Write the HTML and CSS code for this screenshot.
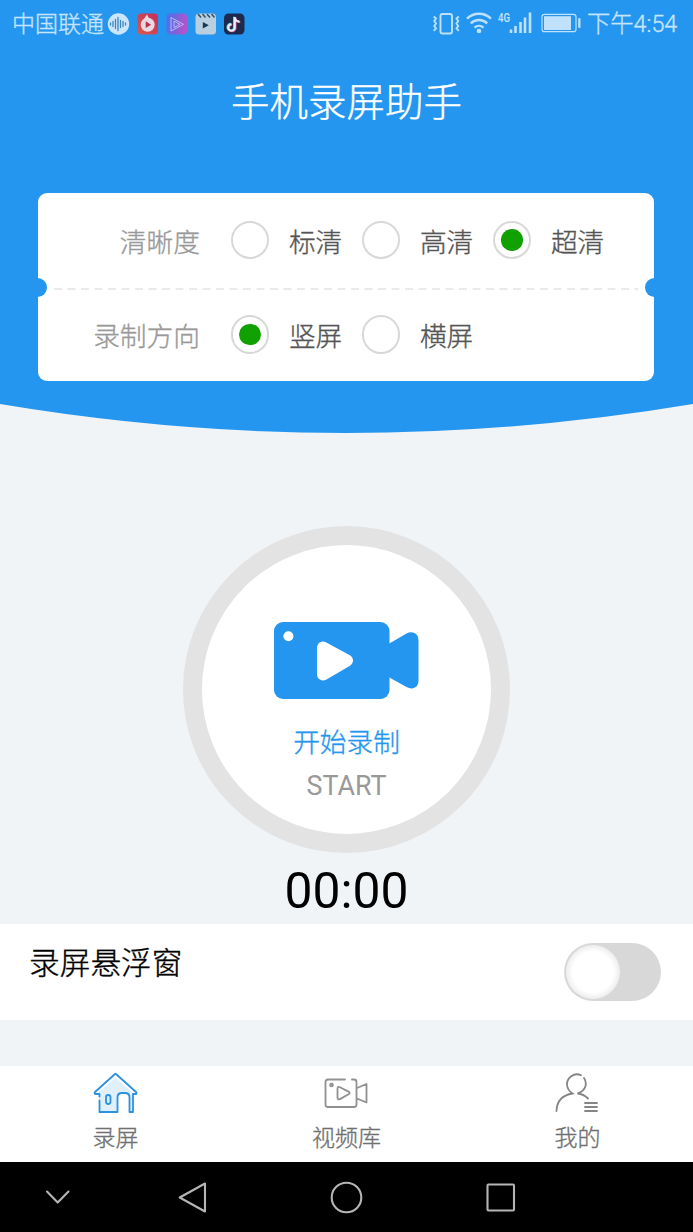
FILE: index.html
```html
<!DOCTYPE html>
<html lang="zh-CN">
<head>
<meta charset="utf-8">
<title>手机录屏助手</title>
<link rel="stylesheet" href="styles.css">
</head>
<body>
<div class="phone">
  <header class="header">
    <div class="status">
      <span class="carrier">中国联通</span>
      <svg class="apps" width="144" height="24" viewBox="0 0 144 24">
        <defs>
          <linearGradient id="red" x1="0" y1="1" x2="1" y2="0"><stop offset="0" stop-color="#d95a4a"/><stop offset="1" stop-color="#c02f5c"/></linearGradient>
          <linearGradient id="violet" x1="0" y1="0.3" x2="1" y2="0.5"><stop offset="0" stop-color="#4d6ff0"/><stop offset="0.5" stop-color="#7d62dc"/><stop offset="1" stop-color="#bd50c8"/></linearGradient>
        </defs>
        <circle cx="14.5" cy="12" r="10.7" fill="#cbe6fc"/>
        <path d="M6.5 11v2M9 9.500v5M11.500 7.500v9M14 5.500v13M16.500 8.500v7M19 9.500v5M21.500 11v2" stroke="#3d86bd" stroke-width="1.300" stroke-linecap="round"/>
        <rect x="33.500" y="1.500" width="20.500" height="21" rx="4" fill="url(#red)"/>
        <circle cx="43.700" cy="12.700" r="7" fill="#ead8e2"/>
        <path d="M39 8.500 43 2.500l2 4z" fill="#ead8e2"/>
        <path d="M41.700 9.300v6.800l5.400-3.400z" fill="#b8324c"/>
        <rect x="62.500" y="1.500" width="20.500" height="21" rx="4" fill="url(#violet)"/>
        <path d="M67 5.500v13.500l12.500-6.700zM70 9v6.500l6-3.200z" fill="none" stroke="#b9c6f5" stroke-width="0.900" stroke-linejoin="round"/>
        <rect x="91.500" y="1.500" width="20.500" height="21" rx="3.500" fill="#b9cfdf"/>
        <path d="M94 2l3 3.500M98.500 2l3 3.500M103 2l3 3.500M107.500 2l3 3.500" stroke="#31526d" stroke-width="1.500"/>
        <path d="M98.800 10v6.600l6-3.300z" fill="#153a58"/>
        <rect x="120" y="1.500" width="20.500" height="21" rx="4.500" fill="#1e2a4d"/>
        <g fill="none" stroke-width="2.100"><path d="M130.800 5v10.500a3.300 3.300 0 1 1-3.300-3.300M130.800 6c.8 2.600 2.300 3.600 4.800 3.700" stroke="#59cfe8" transform="translate(-.7 -.3)"/><path d="M130.800 5v10.500a3.300 3.300 0 1 1-3.300-3.300M130.800 6c.8 2.600 2.300 3.600 4.800 3.700" stroke="#d9527f" transform="translate(.7 .5)"/><path d="M130.800 5v10.500a3.300 3.300 0 1 1-3.300-3.300M130.800 6c.8 2.600 2.300 3.600 4.800 3.700" stroke="#e6effa"/></g>
      </svg>
      <svg class="signals" width="150" height="26" viewBox="0 0 150 26">
        <g fill="none" stroke="#bfe1fb">
          <rect x="9.500" y="3" width="11.500" height="19.500" rx="2" stroke-width="1.900"/>
          <path d="M2.700 5.500 5 7.500 3.300 10l1.700 2.500L3.300 15l1.700 2.500L2.700 19.800M27.800 5.500 25.500 7.500 27.200 10l-1.700 2.500L27.200 15l-1.700 2.500 2.300 2.300" stroke-width="1.900"/>
          <path d="M36 7.600a17.300 17.300 0 0 1 24 0M39.800 12.300a12 12 0 0 1 16.400 0M43.500 16.600a6.700 6.700 0 0 1 9 0" stroke-width="2.400"/>
          <rect x="111" y="3.300" width="34" height="17.400" rx="2.500" stroke-width="1.200"/>
        </g>
        <circle cx="48" cy="20" r="2.300" fill="#bfe1fb"/>
        <path d="M80 22v-3.500M84.500 22v-7M89.500 22v-11M94 22V6.500M99 22V1.500" stroke="#bfe1fb" stroke-width="2.600"/>
        <rect x="113" y="5.200" width="27" height="13.800" fill="#bfe1fb"/>
        <rect x="147.200" y="7" width="2.300" height="10" rx="1" fill="#bfe1fb"/>
        <text class="net" x="67" y="10.500" textLength="12" lengthAdjust="spacingAndGlyphs">4G</text>
      </svg>
      <span class="clock">下午4:54</span>
    </div>
    <h1 class="title">手机录屏助手</h1>
    <section class="card">
      <div class="row">
        <span class="label">清晰度</span>
        <span class="option"><i class="radio"></i>标清</span>
        <span class="option"><i class="radio"></i>高清</span>
        <span class="option"><i class="radio checked"></i>超清</span>
      </div>
      <svg class="divider" width="584" height="2" viewBox="0 0 584 2"><path d="M0 1h584" stroke="#e3e3e3" stroke-width="1.600" stroke-dasharray="8 5.500"/></svg>
      <div class="row">
        <span class="label">录制方向</span>
        <span class="option"><i class="radio checked"></i>竖屏</span>
        <span class="option"><i class="radio"></i>横屏</span>
      </div>
      <i class="notch left"></i><i class="notch right"></i>
    </section>
  </header>
  <svg class="curve" width="693" height="30" viewBox="0 0 693 30"><path d="M0 0Q346.500 58 693 0z" fill="#2496ef"/></svg>
  <main class="main">
    <div class="record">
      <svg width="145" height="77" viewBox="0 0 145 77">
        <rect width="115.500" height="77" rx="9" fill="#2496ef"/>
        <path d="M114 22.300 132.500 11.500Q136 9.500 139 10.500Q144.500 12 144.500 18V58.500Q144.500 65 139 66.300Q136 67 132.500 65L114 54.700z" fill="#2496ef"/>
        <circle cx="14.400" cy="14.300" r="5" fill="#fff"/>
        <path d="M49 25.500v27L73 38.500z" fill="#fff" stroke="#fff" stroke-width="12" stroke-linejoin="round"/>
      </svg>
      <span class="record-cn">开始录制</span>
      <span class="record-en">START</span>
    </div>
    <div class="timer">00:00</div>
  </main>
  <div class="setting">
    <span class="setting-name">录屏悬浮窗</span>
    <span class="toggle"><i class="knob"></i></span>
  </div>
  <nav class="tabs">
    <div class="tab">
      <svg width="46" height="44" viewBox="0.500 0.500 46 44" fill="none" stroke="#2c91df" stroke-width="1.800" stroke-linejoin="round" stroke-linecap="round">
        <path d="M6 21 23 6l17 15v19h-3V25q0-3-4-3h-4q-4 0-4 3v15H7z" fill="#dff0fb" stroke="none"/>
        <path d="M7 29v11.500h18V26q0-4.500 4.500-4.500h3Q37 21.500 37 26v14.500h3.500V22.500h3.200L44 21 23.500 2.500Q23 2 22.500 2.500L2 21l.5 1.500H7V25"/>
        <rect x="13.500" y="23.500" width="4.500" height="9" rx="2.200"/>
      </svg>
      <span>录屏</span>
    </div>
    <div class="tab">
      <svg width="46" height="44" viewBox="1 0.500 46 44" fill="none" stroke="#909090" stroke-width="1.800" stroke-linejoin="round" stroke-linecap="round">
        <path d="M22 8H5Q2.500 8 2.500 10.500V33Q2.500 35.500 5 35.500H31Q33.500 35.500 33.500 33V10.500Q33.500 8 31 8H29M34 16.500 43.500 12.500V31L34 27"/>
        <circle cx="8.500" cy="13.500" r="1.400" fill="#bbb"/>
        <path d="M14.500 17.500q0-3 2.500-1.700l8.500 4.300q2.300 1.400 0 2.700l-8.500 4.800q-2.500 1.200-2.500-1.700z"/>
      </svg>
      <span>视频库</span>
    </div>
    <div class="tab">
      <svg width="46" height="44" viewBox="1.500 1.500 46 44" fill="none" stroke="#858585" stroke-width="1.800" stroke-linecap="round">
        <path d="M27.500 4.700A10 10 0 0 0 13.500 14.500Q14.200 20 19 23Q3.500 25.500 3 40.500M30.500 7.500Q33 11 32 15.500Q30.500 21 24 23Q30 23.500 34.500 28M31.500 32.500H43.500M31.500 36.500H43.500M31.500 40.500H43.500"/>
      </svg>
      <span>我的</span>
    </div>
  </nav>
  <div class="system">
    <svg width="693" height="70" viewBox="0 0 693 70" fill="none" stroke="#b5b5b5" stroke-width="2.100" stroke-linejoin="round" stroke-linecap="round">
      <path d="M47 29.500 57.700 40.500 68.500 29.500M205 21.500V49.500L179.700 35.500z"/>
      <circle cx="346.500" cy="35.500" r="14.800"/>
      <rect x="487.500" y="22.500" width="26.500" height="26" rx="1"/>
    </svg>
  </div>
</div>
</body>
</html>
```

FILE: styles.css
```css
* { box-sizing: border-box; }

body {
  margin: 0;
  font-family: Roboto, "Noto Sans CJK SC", sans-serif;
  font-weight: 300;
  -webkit-text-stroke: 0.35px;
}

svg { display: block; flex: none; }

.phone {
  display: flex;
  flex-direction: column;
  width: 693px;
  height: 1232px;
  overflow: hidden;
  background: #f0f4f7;
}

.header {
  flex: none;
  height: 404px;
  background: #2496ef;
}

.status {
  display: flex;
  align-items: center;
  height: 47px;
  padding: 0 15px 0 12px;
  color: #c6e4fc;
  font-size: 23px;
  line-height: 47px;
  white-space: nowrap;
}

.carrier { width: 92px; padding-top: 2px; }
.signals { margin-left: auto; margin-right: 6px; }
.clock { width: 91px; padding-top: 2px; font-size: 23.300px; }

.net {
  fill: #c6e4fc;
  font: 500 12px Roboto, sans-serif;
}

.title {
  margin: 28px 0 0;
  color: #fff;
  font-size: 38.500px;
  font-weight: 300;
  line-height: 56px;
  text-align: center;
}

.card {
  position: relative;
  display: flex;
  flex-direction: column;
  width: 616px;
  height: 188.500px;
  margin: 61.500px 0 0 38.400px;
  border-radius: 9px;
  background: #fff;
}

.row {
  display: flex;
  align-items: center;
  height: 95px;
  color: #555;
  font-size: 26.700px;
}

.divider { margin: 0 16px; }
.divider + .row { height: 90px; }

.label {
  width: 161.500px;
  margin-right: 31px;
  color: #999;
  text-align: right;
}

.option {
  display: flex;
  align-items: center;
  width: 131px;
}

.radio {
  display: grid;
  place-items: center;
  width: 38.500px;
  height: 38.500px;
  margin-right: 19.500px;
  border: 2px solid #d8d8d8;
  border-radius: 50%;
}

.checked::before {
  content: "";
  width: 21.500px;
  height: 21.500px;
  border-radius: 50%;
  background: #10a000;
}

.notch {
  position: absolute;
  top: 85px;
  width: 19px;
  height: 19px;
  border-radius: 50%;
  background: #2496ef;
}

.left { left: -10px; }
.right { right: -10px; }

.curve { flex: none; }

.main {
  display: flex;
  flex: none;
  flex-direction: column;
  align-items: center;
  height: 490px;
  padding-top: 92px;
}

.record {
  display: flex;
  flex: none;
  flex-direction: column;
  align-items: center;
  width: 327px;
  height: 327px;
  padding-top: 77px;
  border: 19px solid #e3e3e3;
  border-radius: 50%;
  background: #fff;
}

.record-cn {
  margin-top: 24px;
  color: #2496ef;
  font-size: 26.700px;
  line-height: 40px;
}

.record-en {
  margin-top: 3px;
  color: #999;
  font-size: 26.800px;
  font-weight: 400;
  line-height: 40px;
  -webkit-text-stroke: 0;
}

.timer {
  padding-top: 1px;
  color: #000;
  font-size: 49.800px;
  font-weight: 400;
  line-height: 74px;
  -webkit-text-stroke: 0;
}

.setting {
  display: flex;
  flex: none;
  justify-content: space-between;
  height: 96px;
  padding: 19px 32px 19px 29px;
  background: #fff;
}

.setting-name {
  padding-top: 1px;
  color: #000;
  font-size: 30.700px;
  line-height: 40px;
}

.toggle {
  width: 97px;
  height: 58px;
  padding: 2px;
  border-radius: 29px;
  background: #d8d8d8;
}

.knob {
  display: block;
  width: 54px;
  height: 54px;
  border-radius: 50%;
  background: radial-gradient(circle closest-side, #fff 75%, #ededed 100%);
}

.tabs {
  display: grid;
  flex: none;
  grid-template-columns: repeat(3, 1fr);
  height: 96px;
  margin-top: 46px;
  background: #fff;
}

.tab {
  display: flex;
  flex-direction: column;
  align-items: center;
  padding-top: 6px;
  color: #707070;
  font-size: 23px;
  line-height: 46px;
}

.system {
  flex: none;
  height: 70px;
  background: #000;
}
```
